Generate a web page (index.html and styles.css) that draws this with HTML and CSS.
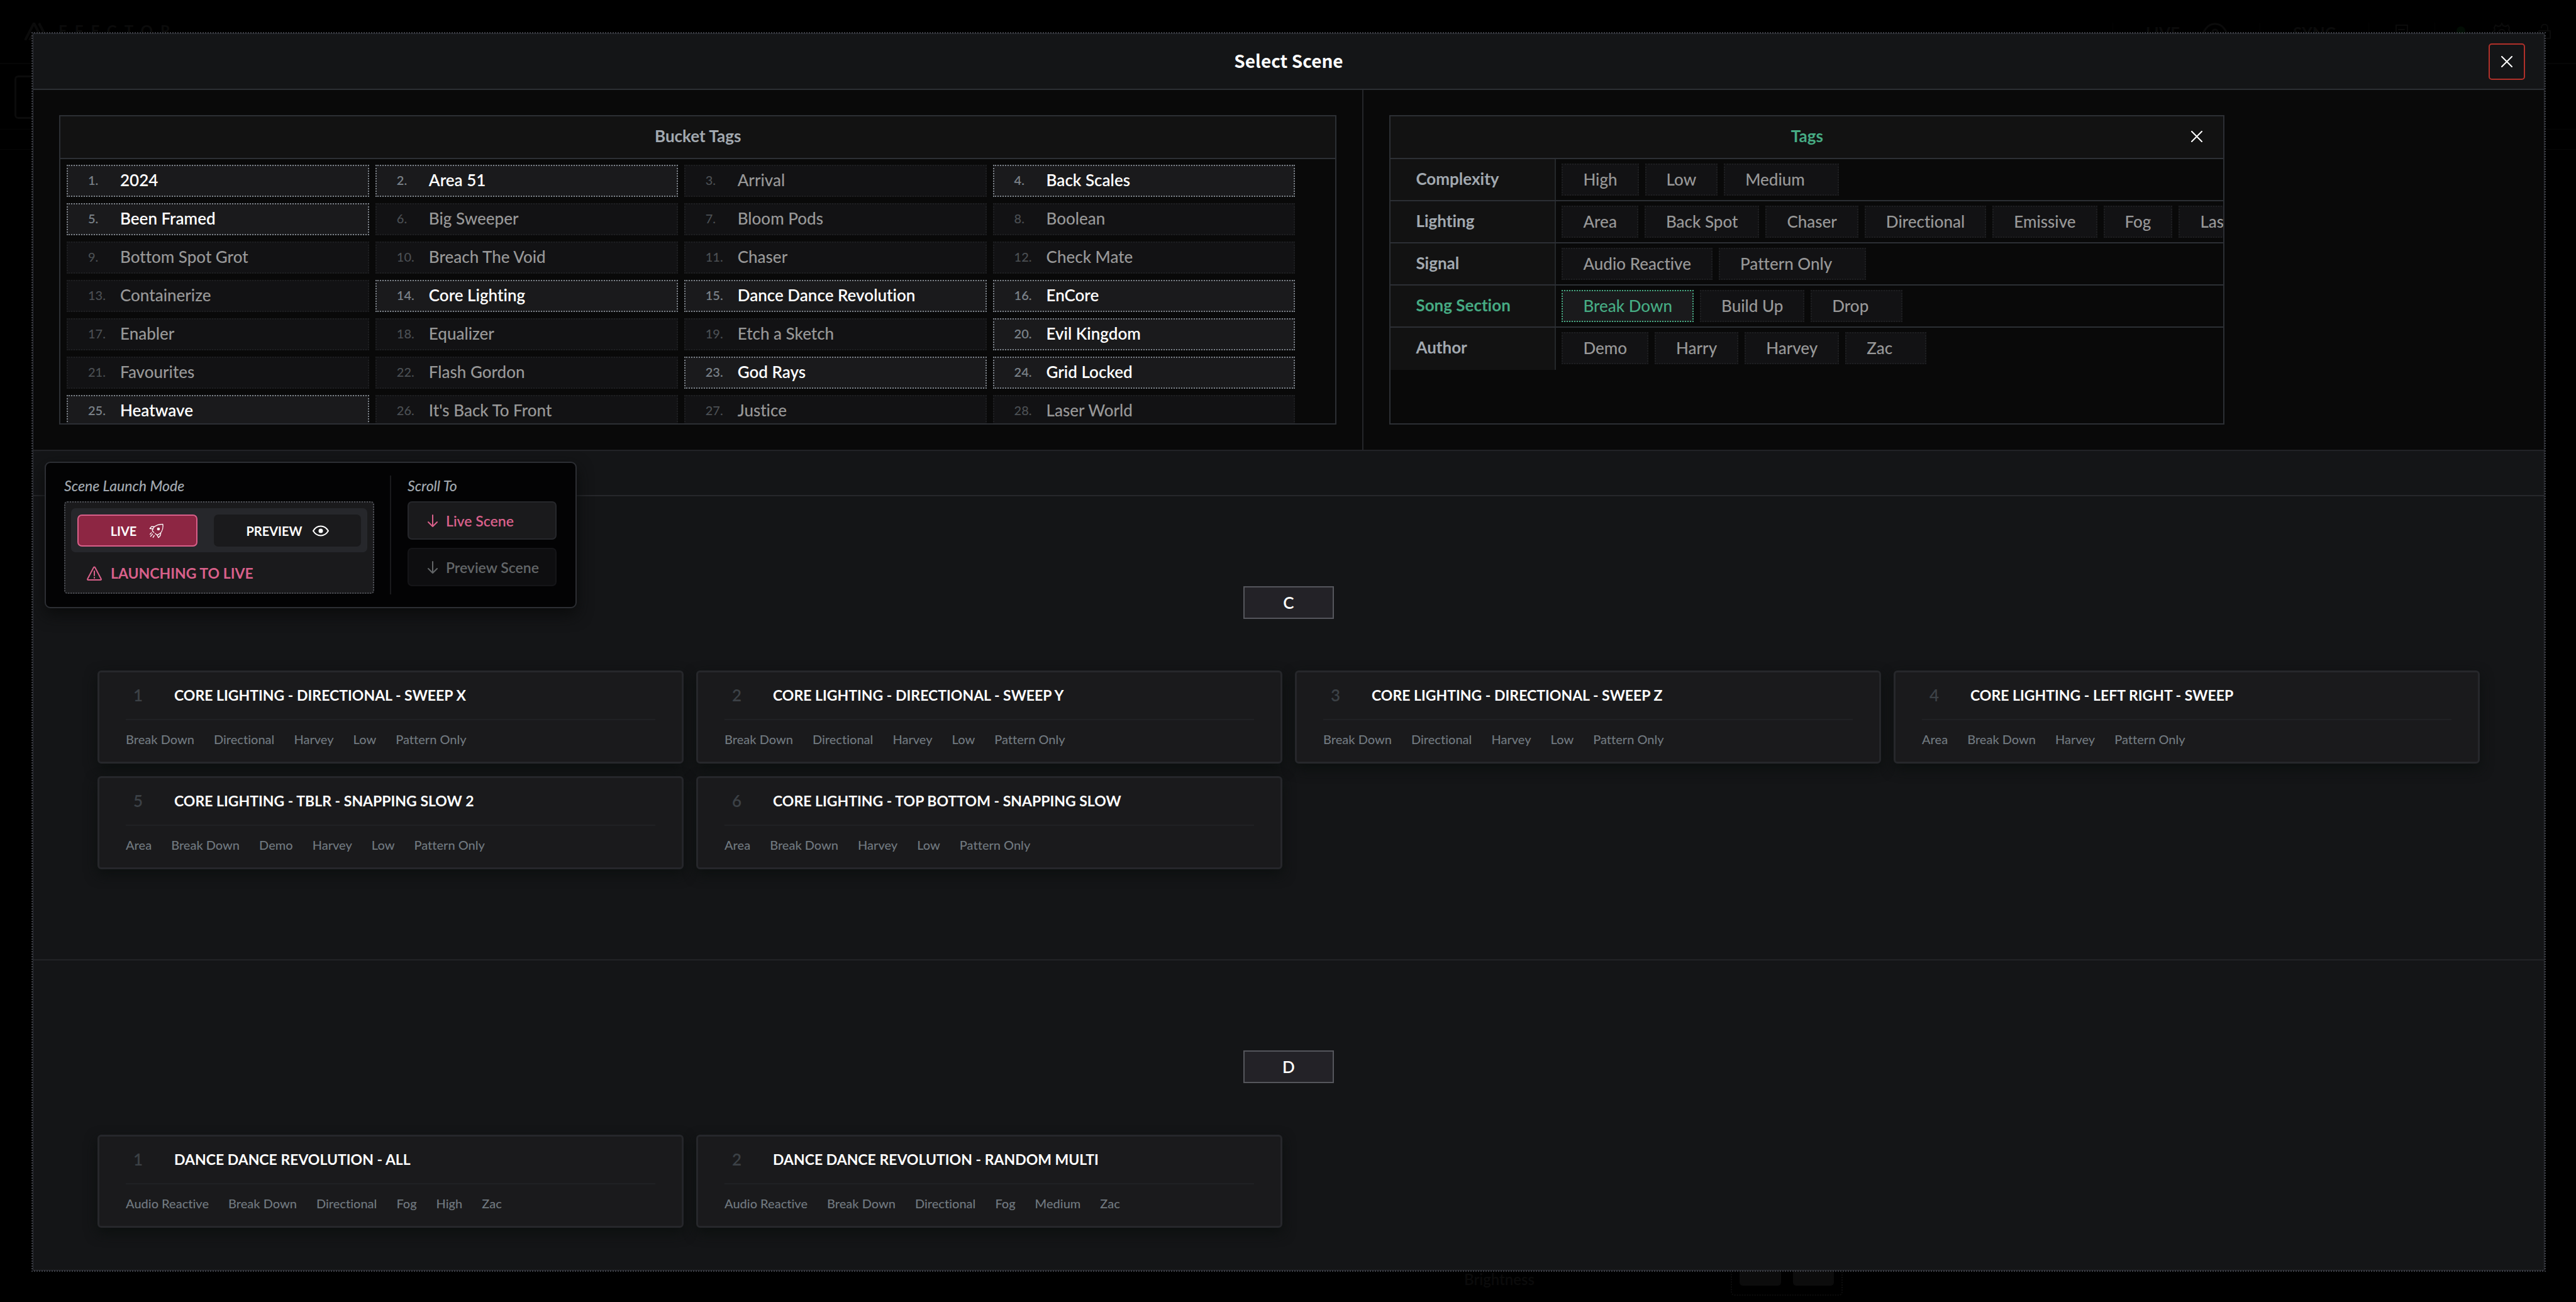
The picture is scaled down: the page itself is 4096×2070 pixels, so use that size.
FILE: index.html
```html
<!DOCTYPE html>
<html lang="en">
<head>
<meta charset="utf-8">
<title>Select Scene</title>
<link rel="stylesheet" href="styles.css">
</head>
<body>
<svg class="defs" aria-hidden="true">
  <symbol id="i-x" viewBox="0 0 18 18"><path d="M1 1 17 17M17 1 1 17"/></symbol>
  <symbol id="i-down" viewBox="0 0 16 20"><path d="M8 1V19M1 12l7 7 7-7"/></symbol>
  <symbol id="i-eye" viewBox="0 0 26 18"><path d="M1 9C4 4 8 1.500 13 1.500S22 4 25 9c-3 5-7 7.500-12 7.500S4 14 1 9z"/><circle class="fill" cx="13" cy="9" r="2.500"/></symbol>
</svg>

<div class="app" aria-hidden="true">
  <header class="topbar">
    <div class="brand">
      <svg class="brand-mark" viewBox="0 0 42 28"><path d="M2 28 16 1l14 27M9 28l7-13M24 1l14 27"/></svg>
      <span class="brand-name">EFECTOR</span>
    </div>
    <div class="status">
      <span class="stat stat-live">LIVE <svg class="ic-eye" viewBox="0 0 38 30"><path d="M1 15C6 5 12 2 19 2s13 3 18 13c-5 10-11 13-18 13S6 25 1 15z"/><circle cx="19" cy="15" r="4"/></svg></span>
      <span class="stat stat-sync">SYNC</span>
      <span class="stat stat-doc"><svg class="ic-doc" viewBox="0 0 20 28"><path d="M1 1h18v26H1zM5 8h9M5 14h9M5 20h9"/></svg></span>
      <span class="stat stat-tools"><i class="led"></i><svg class="ic-gear" viewBox="0 0 32 32"><path d="M16 1l2 4 4 1 4-2 2 4-1 4 4 4-4 4 1 4-2 4-4-2-4 1-2 4-2-4-4-1-4 2-2-4 1-4-4-4 4-4-1-4 2-4 4 2 4-1z"/><circle cx="16" cy="16" r="5"/></svg><svg class="ic-lock" viewBox="0 0 20 24"><path d="M1 11h18v12H1zM5 6c0-7 10-7 10 0v5"/></svg></span>
    </div>
  </header>
  <div class="app-row"><div class="app-field"></div></div>
  <div class="app-strip"></div>
  <footer class="app-foot">
    <span class="foot-label">Brightness</span>
    <div class="foot-pads"><i></i><i></i></div>
  </footer>
</div>

<div class="overlay">
<div class="modal" role="dialog" aria-labelledby="modal-title">
  <header class="modal-head">
    <h1 id="modal-title">Select Scene</h1>
    <button class="close" aria-label="Close"><svg><use href="#i-x"/></svg></button>
  </header>

  <div class="filters">
    <div class="filter-col">
      <section class="panel">
        <h2 class="panel-head">Bucket Tags</h2>
        <div class="buckets">
          <button class="bucket on"><span>1.</span>2024</button>
          <button class="bucket on"><span>2.</span>Area 51</button>
          <button class="bucket"><span>3.</span>Arrival</button>
          <button class="bucket on"><span>4.</span>Back Scales</button>
          <button class="bucket on"><span>5.</span>Been Framed</button>
          <button class="bucket"><span>6.</span>Big Sweeper</button>
          <button class="bucket"><span>7.</span>Bloom Pods</button>
          <button class="bucket"><span>8.</span>Boolean</button>
          <button class="bucket"><span>9.</span>Bottom Spot Grot</button>
          <button class="bucket"><span>10.</span>Breach The Void</button>
          <button class="bucket"><span>11.</span>Chaser</button>
          <button class="bucket"><span>12.</span>Check Mate</button>
          <button class="bucket"><span>13.</span>Containerize</button>
          <button class="bucket on"><span>14.</span>Core Lighting</button>
          <button class="bucket on"><span>15.</span>Dance Dance Revolution</button>
          <button class="bucket on"><span>16.</span>EnCore</button>
          <button class="bucket"><span>17.</span>Enabler</button>
          <button class="bucket"><span>18.</span>Equalizer</button>
          <button class="bucket"><span>19.</span>Etch a Sketch</button>
          <button class="bucket on"><span>20.</span>Evil Kingdom</button>
          <button class="bucket"><span>21.</span>Favourites</button>
          <button class="bucket"><span>22.</span>Flash Gordon</button>
          <button class="bucket on"><span>23.</span>God Rays</button>
          <button class="bucket on"><span>24.</span>Grid Locked</button>
          <button class="bucket on"><span>25.</span>Heatwave</button>
          <button class="bucket"><span>26.</span>It's Back To Front</button>
          <button class="bucket"><span>27.</span>Justice</button>
          <button class="bucket"><span>28.</span>Laser World</button>
        </div>
      </section>
    </div>
    <div class="filter-col tags-col">
      <section class="panel tags-panel">
        <h2 class="panel-head active">Tags</h2>
        <button class="clear" aria-label="Clear tags"><svg><use href="#i-x"/></svg></button>
        <div class="tag-row"><h3>Complexity</h3><div class="tags"><button>High</button><button>Low</button><button>Medium</button></div></div>
        <div class="tag-row"><h3>Lighting</h3><div class="tags"><button>Area</button><button>Back Spot</button><button>Chaser</button><button>Directional</button><button>Emissive</button><button>Fog</button><button>Laser</button></div></div>
        <div class="tag-row"><h3>Signal</h3><div class="tags"><button>Audio Reactive</button><button>Pattern Only</button></div></div>
        <div class="tag-row active"><h3>Song Section</h3><div class="tags"><button class="on">Break Down</button><button>Build Up</button><button>Drop</button></div></div>
        <div class="tag-row"><h3>Author</h3><div class="tags"><button>Demo</button><button>Harry</button><button>Harvey</button><button>Zac</button></div></div>
      </section>
    </div>
  </div>

  <main class="scenes">
    <div class="bucket-end"></div>

    <section class="group">
      <h2 class="letter">C</h2>
      <div class="cards">
        <article class="card"><h3><span>1</span>CORE LIGHTING - DIRECTIONAL - SWEEP X</h3><ul><li>Break Down</li><li>Directional</li><li>Harvey</li><li>Low</li><li>Pattern Only</li></ul></article>
        <article class="card"><h3><span>2</span>CORE LIGHTING - DIRECTIONAL - SWEEP Y</h3><ul><li>Break Down</li><li>Directional</li><li>Harvey</li><li>Low</li><li>Pattern Only</li></ul></article>
        <article class="card"><h3><span>3</span>CORE LIGHTING - DIRECTIONAL - SWEEP Z</h3><ul><li>Break Down</li><li>Directional</li><li>Harvey</li><li>Low</li><li>Pattern Only</li></ul></article>
        <article class="card"><h3><span>4</span>CORE LIGHTING - LEFT RIGHT - SWEEP</h3><ul><li>Area</li><li>Break Down</li><li>Harvey</li><li>Pattern Only</li></ul></article>
        <article class="card"><h3><span>5</span>CORE LIGHTING - TBLR - SNAPPING SLOW 2</h3><ul><li>Area</li><li>Break Down</li><li>Demo</li><li>Harvey</li><li>Low</li><li>Pattern Only</li></ul></article>
        <article class="card"><h3><span>6</span>CORE LIGHTING - TOP BOTTOM - SNAPPING SLOW</h3><ul><li>Area</li><li>Break Down</li><li>Harvey</li><li>Low</li><li>Pattern Only</li></ul></article>
      </div>
    </section>

    <section class="group">
      <h2 class="letter">D</h2>
      <div class="cards">
        <article class="card"><h3><span>1</span>DANCE DANCE REVOLUTION - ALL</h3><ul><li>Audio Reactive</li><li>Break Down</li><li>Directional</li><li>Fog</li><li>High</li><li>Zac</li></ul></article>
        <article class="card"><h3><span>2</span>DANCE DANCE REVOLUTION - RANDOM MULTI</h3><ul><li>Audio Reactive</li><li>Break Down</li><li>Directional</li><li>Fog</li><li>Medium</li><li>Zac</li></ul></article>
      </div>
    </section>

    <aside class="launch">
      <div class="launch-mode">
        <h4>Scene Launch Mode</h4>
        <div class="mode-box">
          <div class="toggle">
            <button class="mode live">LIVE
              <svg class="rocket" viewBox="22 23 90 90"><path d="M42 69C42 48 62 29 104 28C109 66 90 86 70 93M42 69l9 8M59 84l11 9M47 57 27 54 37 42 55 43M92 79C93 94 87 101 78 108L71 93M36 79l-8 9M43 87 31 101M53 96l-7 11"/><circle class="fill" cx="78" cy="57" r="6"/></svg>
            </button>
            <button class="mode preview">PREVIEW <svg class="eye"><use href="#i-eye"/></svg></button>
          </div>
          <p class="notice"><svg viewBox="0 0 24 23"><path d="M12 1.500Q12.700 1.500 13 2L22.800 20.500Q23.300 22 22 22H2Q.7 22 1.200 20.500L11 2Q11.300 1.500 12 1.500zM12 8v7M12 18v1"/></svg>LAUNCHING TO LIVE</p>
        </div>
      </div>
      <div class="scroll-to">
        <h4>Scroll To</h4>
        <button class="jump"><svg><use href="#i-down"/></svg>Live Scene</button>
        <button class="jump" disabled><svg><use href="#i-down"/></svg>Preview Scene</button>
      </div>
    </aside>
  </main>
</div>
</div>
</body>
</html>
```
FILE: styles.css
```css
:root {
  --line: #2c2f34;
  --ink: #a2a9b0;
  --green: #46ab83;
  --pink: #d9608a;
}
* { box-sizing: border-box; }
html, body { height: 100%; }
body {
  margin: 0;
  overflow: hidden;
  background: #000;
  color: #fff;
  font-family: Lato, "Noto Sans", sans-serif;
  font-size: 26px;
  line-height: 32px;
  font-variant-ligatures: none;
}
h1, h2, h3, h4, p, ul { margin: 0; padding: 0; }
ul { list-style: none; }
button { font: inherit; color: inherit; margin: 0; padding: 0; background: none; border: 0; cursor: pointer; }
svg { display: block; fill: none; stroke: currentColor; stroke-width: 2; stroke-linecap: round; stroke-linejoin: round; }
.fill { fill: currentColor; }
.defs { position: absolute; width: 0; height: 0; }

/* dimmed application behind the dialog */
.app { height: 100%; display: flex; flex-direction: column; color: #0b0b0b; font-weight: 700; }
.topbar { height: 102px; border-bottom: 2px solid #060606; padding: 36px 40px 0 38px; display: flex; justify-content: space-between; align-items: flex-start; }
.brand { display: flex; gap: 13px; }
.brand-mark { width: 42px; height: 28px; stroke-width: 4; stroke-linecap: butt; }
.brand-name { font-size: 24px; line-height: 26px; letter-spacing: 12px; }
.status { display: flex; }
.stat { display: flex; border-left: 1px solid #040404; }
.stat-live { padding: 0 52px; gap: 37px; }
.stat-sync { padding: 0 52px; }
.stat-doc { padding: 3px 42px; }
.stat-tools { padding-left: 34px; gap: 42px; }
.ic-eye { width: 38px; height: 30px; stroke-width: 3; }
.ic-doc { width: 20px; height: 28px; }
.ic-gear { width: 32px; height: 32px; }
.ic-lock { width: 20px; height: 24px; margin-top: 2px; }
.led { width: 14px; height: 14px; margin-top: 6px; border-radius: 50%; background: #020d04; }
.app-row { height: 104px; padding: 18px 23px; border-bottom: 1px solid #060606; }
.app-field { width: 400px; height: 69px; border: 3px solid #0b0b0b; border-radius: 6px; }
.app-strip { height: 32px; border-bottom: 1px solid #060606; }
.app-foot { margin-top: auto; height: 60px; padding-left: 2328px; display: flex; gap: 314px; }
.foot-label { width: 110px; font-size: 24px; font-weight: 600; padding-top: 8px; }
.foot-pads { display: flex; gap: 19px; width: 178px; height: 50px; padding: 0 12px; justify-content: center; border: 2px dotted #0d0d0d; border-top: 0; border-radius: 0 0 6px 6px; }
.foot-pads i { flex: 1; height: 34px; background: #0c0c0c; border-radius: 0 0 5px 5px; }

/* dialog */
.overlay { position: absolute; inset: 0; padding: 53px 50px 50px 52px; }
.modal { height: 100%; display: flex; flex-direction: column; background: #141517; border: 1px solid #303239; outline: 2px dotted #3a3c42; }
.modal-head { flex: none; height: 89px; padding: 0 30px; display: grid; grid-template-columns: 1fr auto 1fr; align-items: center; border-bottom: 2px solid var(--line); }
.modal-head h1 { grid-column: 2; padding-bottom: 4px; font: 700 28px/40px "Noto Sans CJK SC", sans-serif; }
.close { justify-self: end; width: 58px; height: 58px; display: grid; place-items: center; border: 2px solid #b0302a; border-radius: 5px; }
.close svg, .clear svg { width: 18px; height: 18px; }

.filters { flex: none; display: grid; grid-template-columns: 9fr 8fr; background: #090909; border-bottom: 2px solid #222327; }
.filter-col { min-width: 0; padding: 40px 41px; }
.tags-col { border-left: 2px solid #242629; }
.panel { position: relative; height: 492px; overflow: hidden; border: 2px solid var(--line); }
.tags-panel { max-width: 1328px; }
.panel-head { height: 68px; background: #121212; border-bottom: 2px solid var(--line); font-size: 26px; font-weight: 700; line-height: 62px; text-align: center; color: var(--ink); }
.panel-head.active, .tag-row.active h3 { color: var(--green); }
.clear { position: absolute; top: 13px; right: 23px; width: 38px; height: 38px; display: grid; place-items: center; }

.buckets { display: grid; grid-template-columns: repeat(4, 1fr); gap: 10px; padding: 9px 64px 9px 10px; }
.bucket { height: 51px; padding: 0 0 3px 32px; display: flex; align-items: center; text-align: left; background: #121214; border: 2px dotted #1e1f21; color: #989898; font-weight: 500; }
.bucket span { width: 51px; font-size: 20px; color: #4b4f53; }
.bucket.on { background: #1a1a1c; border-color: #7c8289; color: #fff; font-weight: 600; }
.bucket.on span { color: #798087; }

.tag-row { display: flex; height: 67px; border-bottom: 2px solid var(--line); }
.tag-row:last-child { border-bottom: 0; }
.tag-row h3 { flex: none; width: 263px; padding-left: 40px; background: #121212; border-right: 2px solid #24272a; font-size: 26px; font-weight: 700; line-height: 62px; color: var(--ink); }
.tags { display: flex; gap: 10px; padding: 7px 0 7px 9px; color: #989898; font-weight: 500; }
.tags button { flex: none; height: 51px; padding: 0 32px 2px; background: #121214; border: 2px dotted #1e1f21; }
.tags button:last-child { padding-right: 52px; }
.tags button.on { background: #1a1a1c; border-color: var(--green); color: var(--green); }

/* scene list */
.scenes { position: relative; flex: 1; min-height: 0; overflow: hidden; }
.bucket-end { height: 72px; border-bottom: 2px solid #26272b; }
.group { padding: 143px 102px; border-bottom: 2px solid #222327; }
.group:nth-of-type(2) { border-bottom: 0; }
.letter { width: 144px; margin: 0 auto 82px; background: #232227; border: 2px solid #55565c; font-size: 26px; font-weight: 600; line-height: 48px; text-align: center; }
.cards { display: grid; grid-template-columns: repeat(4, 1fr); gap: 20px; }
.card { height: 148px; padding: 0 42px; background: #1a1a1c; border: 3px solid #26272b; border-radius: 6px; box-shadow: 0 8px 20px #0c100f; }
.card h3 { height: 76px; padding-bottom: 2px; display: flex; align-items: center; border-bottom: 2px solid #202124; font-size: 23px; font-weight: 700; }
.card h3 span { width: 77px; padding-left: 12px; font-size: 26px; font-weight: 600; color: #3c4146; }
.card ul { display: flex; gap: 31px; font-size: 20px; font-weight: 500; line-height: 60px; color: #70787f; }

/* floating launch controls */
.launch { position: absolute; top: 17px; left: 18px; height: 233px; padding: 20px 30px 20px 29px; display: flex; background: #030304; border: 2px solid #2c2e33; border-radius: 9px; box-shadow: 0 10px 24px #0b0c0c; }
.launch h4 { font-size: 23px; font-weight: 500; font-style: italic; line-height: 32px; margin-bottom: 9px; color: var(--ink); }
.launch-mode { padding-right: 25px; border-right: 2px solid #1a1a1c; }
.mode-box { width: 493px; height: 147px; padding: 9px; background: #1a1a1c; border: 2px dotted #4e5056; border-radius: 5px; }
.toggle { display: flex; justify-content: space-between; height: 70px; padding: 10px; background: #26272b; border-radius: 7px; }
.mode { display: flex; align-items: center; justify-content: center; height: 51px; border: 2px solid #1a1a1c; border-radius: 7px; background: #1a1a1c; font-size: 20px; font-weight: 700; }
.mode.live { width: 191px; gap: 20px; background: #8d2643; border-color: var(--pink); }
.mode.preview { width: 234px; gap: 16px; }
.rocket { width: 24px; height: 24px; stroke-width: 5; }
.eye { width: 26px; height: 18px; }
.notice { display: flex; align-items: center; gap: 14px; padding: 17px 0 0 25px; font-size: 23px; font-weight: 700; color: var(--pink); }
.notice svg { width: 24px; height: 23px; }
.scroll-to { padding-left: 26px; display: flex; flex-direction: column; }
.jump { width: 237px; height: 61px; margin-bottom: 13px; padding-left: 30px; display: flex; align-items: center; gap: 13px; background: #1a1a1c; border: 2px solid #26272b; border-radius: 7px; font-size: 23px; font-weight: 600; color: var(--pink); }
.jump svg { width: 16px; height: 20px; }
.jump:disabled { background: #0e0e10; border-color: #151518; color: #636668; }
```
